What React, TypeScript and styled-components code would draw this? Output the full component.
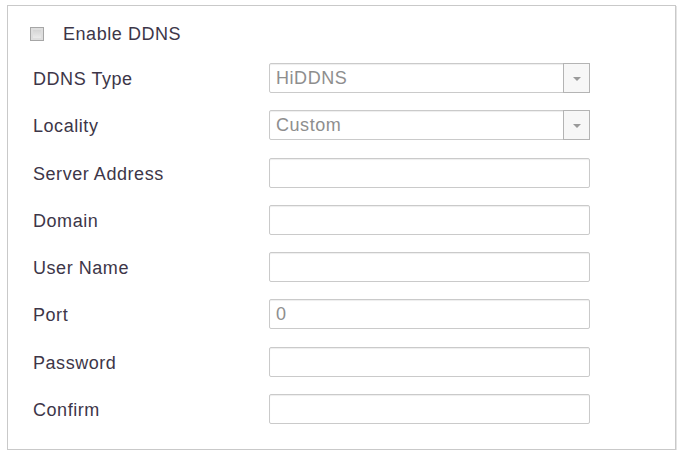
import React from "react";
import styled, { createGlobalStyle } from "styled-components";

const Global = createGlobalStyle`
  html, body { margin: 0; padding: 0; background: #ffffff; }
  body { font-family: "Liberation Sans", Arial, sans-serif; }
`;

const Panel = styled.section`
  box-sizing: border-box;
  margin: 5px 0 0 7px;
  width: 669px;
  height: 445px;
  border: 1px solid #c9c9c9;
  box-shadow: 1px 1px 0 #e4e4e4;
  padding: 21px 0 0 22px;
  color: #3d3648;
  font-size: 18px;
  letter-spacing: 0.55px;
`;

const CheckRow = styled.label`
  display: flex;
  align-items: center;
  height: 14px;
  gap: 19px;
  margin-left: 0;
  margin-bottom: 22px;
`;

const CheckBox = styled.span`
  box-sizing: border-box;
  width: 14px;
  height: 14px;
  border: 1px solid #a6a6a6;
  background: linear-gradient(#cfcfcf, #f0f0f0);
  box-shadow: inset 0 0 0 2px #dedede;
`;

const Form = styled.div`
  display: grid;
  grid-template-columns: 236px 321px;
  grid-auto-rows: 30px;
  row-gap: 17.3px;
  align-items: center;
  margin-left: 3px;
`;

const Label = styled.span`
  line-height: 30px;
  white-space: nowrap;
  padding-top: 2px;
`;

const Field = styled.div`
  box-sizing: border-box;
  height: 30px;
  border: 1px solid #cacaca;
  border-radius: 2px;
  box-shadow: inset 0 1px 1px #eeeeee;
  background: #ffffff;
  display: flex;
  align-items: center;
  padding-left: 6px;
  color: #8e8e8e;
`;

const SelectText = styled.span`
  flex: 1;
`;

const DropButton = styled.span`
  box-sizing: border-box;
  width: 27px;
  height: 30px;
  margin-right: -1px;
  border: 1px solid #b4b4b4;
  background: #f7f7f7;
  display: flex;
  align-items: center;
  justify-content: center;
`;

const Arrow = styled.span`
  width: 0;
  height: 0;
  border-left: 4px solid transparent;
  border-right: 4px solid transparent;
  border-top: 4px solid #9a9a9a;
  margin-top: 2px;
`;

const rows: { label: string; kind: "select" | "input"; value?: string }[] = [
  { label: "DDNS Type", kind: "select", value: "HiDDNS" },
  { label: "Locality", kind: "select", value: "Custom" },
  { label: "Server Address", kind: "input" },
  { label: "Domain", kind: "input" },
  { label: "User Name", kind: "input" },
  { label: "Port", kind: "input", value: "0" },
  { label: "Password", kind: "input" },
  { label: "Confirm", kind: "input" },
];

export default function App() {
  return (
    <>
      <Global />
      <Panel>
        <CheckRow>
          <CheckBox />
          <span>Enable DDNS</span>
        </CheckRow>
        <Form>
          {rows.map((r) => (
            <React.Fragment key={r.label}>
              <Label>{r.label}</Label>
              {r.kind === "select" ? (
                <Field>
                  <SelectText>{r.value}</SelectText>
                  <DropButton>
                    <Arrow />
                  </DropButton>
                </Field>
              ) : (
                <Field>{r.value ?? ""}</Field>
              )}
            </React.Fragment>
          ))}
        </Form>
      </Panel>
    </>
  );
}
